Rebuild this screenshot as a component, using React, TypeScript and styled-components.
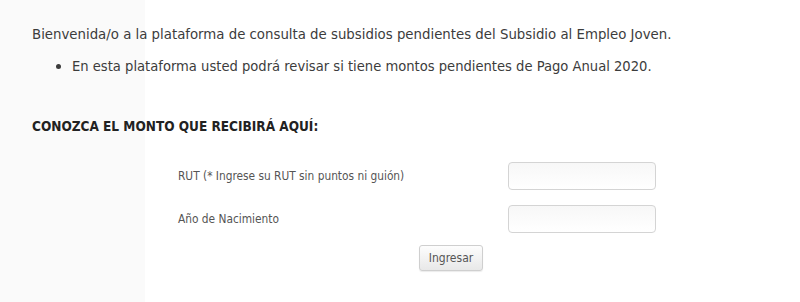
import styled, { createGlobalStyle } from 'styled-components'

const GlobalStyle = createGlobalStyle`
  html, body {
    margin: 0;
    padding: 0;
  }
  body {
    background: linear-gradient(to right, #fafafa 0, #fafafa 145px, #ffffff 145px);
    font-family: 'DejaVu Sans Condensed', 'DejaVu Sans', sans-serif;
    color: #444;
    width: 800px;
    height: 302px;
  }
`

const Page = styled.div`
  padding: 24px 0 0 32px;
`

const Intro = styled.p`
  margin: 0;
  font-size: 14.8px;
  line-height: 20px;
  color: #3c3c3c;
`

const Bullets = styled.ul`
  margin: 12px 0 0;
  padding-left: 40px;
  font-size: 14.6px;
  line-height: 20px;
  color: #3c3c3c;
`

const Heading = styled.h3`
  margin: 40px 0 0;
  font-size: 13.5px;
  line-height: 20px;
  font-weight: bold;
  color: #222;
`

const Form = styled.form`
  margin: 26px 0 0 146px;
  display: grid;
  grid-template-columns: 330px 148px;
  row-gap: 15px;
  align-items: center;
`

const Label = styled.label`
  font-size: 11.8px;
  color: #555;
`

const Input = styled.input`
  box-sizing: border-box;
  width: 148px;
  height: 28px;
  border: 1px solid #d4d4d4;
  border-radius: 4px;
  background: linear-gradient(#f7f7f7, #ffffff);
  font-family: inherit;
  outline: none;
`

const ButtonRow = styled.div`
  grid-column: 1 / 3;
  padding-left: 241px;
  margin-top: -3px;
`

const Button = styled.button`
  box-sizing: border-box;
  width: 64px;
  height: 26px;
  border: 1px solid #cfcfcf;
  border-radius: 3px;
  background: linear-gradient(#fdfdfd, #e8e8e8);
  box-shadow: 0 1px 1px rgba(0, 0, 0, 0.08);
  font-family: inherit;
  font-size: 12px;
  color: #555;
  padding: 0;
`

export default function App() {
  return (
    <>
      <GlobalStyle />
      <Page>
        <Intro>
          Bienvenida/o a la plataforma de consulta de subsidios pendientes del Subsidio al Empleo Joven.
        </Intro>
        <Bullets>
          <li>En esta plataforma usted podrá revisar si tiene montos pendientes de Pago Anual 2020.</li>
        </Bullets>
        <Heading>CONOZCA EL MONTO QUE RECIBIRÁ AQUÍ:</Heading>
        <Form onSubmit={e => e.preventDefault()}>
          <Label htmlFor="rut">RUT (* Ingrese su RUT sin puntos ni guión)</Label>
          <Input id="rut" type="text" />
          <Label htmlFor="anio">Año de Nacimiento</Label>
          <Input id="anio" type="text" />
          <ButtonRow>
            <Button type="submit">Ingresar</Button>
          </ButtonRow>
        </Form>
      </Page>
    </>
  )
}
